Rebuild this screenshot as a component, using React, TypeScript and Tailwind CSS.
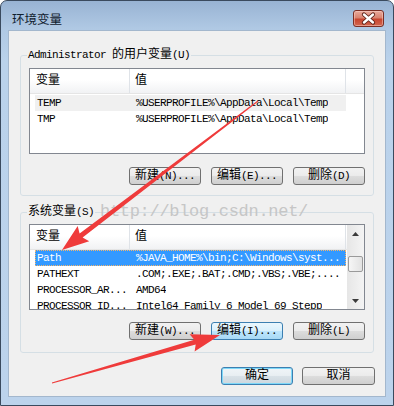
import type { ReactNode } from 'react';

const ascii = 'text-[11px] tracking-[-0.6px]';

type Variant = 'normal' | 'hover' | 'default';

const btnStyle: Record<Variant, string> = {
	normal:
		'border-[#707070] bg-[linear-gradient(to_bottom,#f2f2f2_0%,#ebebeb_49%,#dddddd_50%,#cfcfcf_100%)]',
	hover:
		'border-[#3c7fb1] bg-[linear-gradient(to_bottom,#eaf6fd_0%,#d9f0fc_49%,#bee6fd_50%,#a7d9f5_100%)]',
	default:
		'border-[#3c7fb1] shadow-[inset_0_0_0_1px_#7fd8f8] bg-[linear-gradient(to_bottom,#f0f5f8_0%,#e8eef2_49%,#d9e2e8_50%,#cdd7de_100%)]'
};

function Btn({
	cn,
	en,
	variant = 'normal',
	w = 'w-[72px]'
}: {
	cn: string;
	en?: string;
	variant?: Variant;
	w?: string;
}) {
	return (
		<div
			className={`${w} h-[18px] rounded-[3px] border flex items-center justify-center leading-[16px] ${btnStyle[variant]}`}
		>
			<span>{cn}</span>
			{en && <span className={ascii}>{en}</span>}
		</div>
	);
}

function Header({ extra }: { extra?: boolean }) {
	return (
		<div className="h-[25px] flex shrink-0 border-b border-[#e5e5e5] bg-[linear-gradient(to_bottom,#ffffff_0%,#ffffff_45%,#f1f2f4_100%)] leading-[24px]">
			<div className="w-[100px] border-r border-[#dfe3e8] pl-[6px]">变量</div>
			<div className="w-[216px] border-r border-[#dfe3e8] pl-[5px]">值</div>
			{extra && <div className="flex-1" />}
		</div>
	);
}

type Row = { name: string; value: string; state?: 'selected' | 'inactive' };

function Rows({ rows, pt }: { rows: Row[]; pt: string }) {
	return (
		<div className={`pl-[5px] ${pt} ${ascii}`}>
			{rows.map((r) => (
				<div
					key={r.name}
					className={`w-[311px] h-[16px] flex items-center leading-[16px] whitespace-nowrap ${
						r.state === 'selected'
							? 'bg-[#3399ff] text-white outline-1 outline-dotted outline-[#f5b56a] -outline-offset-1'
							: r.state === 'inactive'
								? 'bg-[#f0f0f0]'
								: ''
					}`}
				>
					<div className="w-[95px] pl-[2px] shrink-0 overflow-hidden">{r.name}</div>
					<div className="pl-[6px] overflow-hidden">{r.value}</div>
				</div>
			))}
		</div>
	);
}

function Tri({ down }: { down?: boolean }) {
	return (
		<svg width="7" height="4" viewBox="0 0 7 4">
			<path d={down ? 'M0 0H7L3.5 4Z' : 'M0 4H7L3.5 0Z'} fill="#3a3a3a" />
		</svg>
	);
}

function Group({ label, children, cls }: { label: ReactNode; children: ReactNode; cls?: string }) {
	return (
		<fieldset className={`border border-[#d5dfe5] rounded-[3px] ${cls ?? ''}`}>
			<legend className="ml-[6px] px-[1px] leading-[14px]">{label}</legend>
			<div className="px-[8px]">{children}</div>
		</fieldset>
	);
}

function arrowPoints(
	tx: number,
	ty: number,
	hx: number,
	hy: number,
	tailW: number,
	neckW: number,
	headLen: number,
	headW: number
) {
	const dx = hx - tx;
	const dy = hy - ty;
	const len = Math.hypot(dx, dy);
	const ux = dx / len;
	const uy = dy / len;
	const nx = -uy;
	const ny = ux;
	const bx = hx - ux * headLen;
	const by = hy - uy * headLen;
	const p = (x: number, y: number, s: number) => `${(x + nx * s).toFixed(1)},${(y + ny * s).toFixed(1)}`;
	return [
		p(tx, ty, tailW / 2),
		p(bx, by, neckW / 2),
		p(bx - ux * 3, by - uy * 3, headW / 2),
		p(hx, hy, 0),
		p(bx - ux * 3, by - uy * 3, -headW / 2),
		p(bx, by, -neckW / 2),
		p(tx, ty, -tailW / 2)
	].join(' ');
}

export default function App() {
	const userRows: Row[] = [
		{ name: 'TEMP', value: '%USERPROFILE%\\AppData\\Local\\Temp', state: 'inactive' },
		{ name: 'TMP', value: '%USERPROFILE%\\AppData\\Local\\Temp' }
	];
	const sysRows: Row[] = [
		{ name: 'Path', value: '%JAVA_HOME%\\bin;C:\\Windows\\syst...', state: 'selected' },
		{ name: 'PATHEXT', value: '.COM;.EXE;.BAT;.CMD;.VBS;.VBE;....' },
		{ name: 'PROCESSOR_AR...', value: 'AMD64' },
		{ name: 'PROCESSOR_ID...', value: 'Intel64 Family 6 Model 69 Stepp' }
	];

	return (
		<div className="w-[394px] h-[406px] relative overflow-hidden rounded-t-[7px] border border-[#3a4a5e] bg-[linear-gradient(to_bottom,#98b3d3_0px,#b0c9e4_28px,#bad2eb_60px,#bcd3ec_100%)] font-['Liberation_Mono','Noto_Sans_CJK_SC',monospace] text-[12px] text-black">
			{/* title bar */}
			<div className="h-[29px] flex items-start justify-between pl-[11px] pr-[9px] pt-[9px]">
				<span className="font-['Noto_Sans_CJK_SC',sans-serif] text-[12.5px] leading-[17px] text-[#10202e]">
					环境变量
				</span>
				<div className="w-[31px] h-[17px] rounded-[3px] border border-[#7a2e24] bg-[linear-gradient(to_bottom,#e9aa9c_0%,#d98370_45%,#c8452f_55%,#d2664f_100%)] shadow-[inset_0_0_0_1px_rgba(255,220,210,0.45)] flex items-center justify-center">
					<svg width="29" height="15" viewBox="0 0 29 15">
						<path d="M10 3.5L19 11.5M19 3.5L10 11.5" stroke="#5a1f16" strokeWidth="4.2" strokeLinecap="round" />
						<path d="M10 3.5L19 11.5M19 3.5L10 11.5" stroke="#ffffff" strokeWidth="2.4" strokeLinecap="round" />
					</svg>
				</div>
			</div>

			{/* client area */}
			<div className="mx-[7px] h-[367px] bg-[#f0f0f0] border border-[#a3b7cd] px-[11px] pt-[17px]">
				<Group
					label={
						<>
							<span className={ascii}>Administrator </span>的用户变量<span className={ascii}>(U)</span>
						</>
					}
					cls="pb-[10px]"
				>
					<div className="mt-[6px] h-[86px] border border-[#828790] bg-white overflow-hidden flex flex-col">
						<Header extra />
						<Rows rows={userRows} pt="pt-[1px]" />
					</div>
					<div className="mt-[13px] flex justify-end gap-[10px]">
						<Btn cn="新建" en="(N)..." />
						<Btn cn="编辑" en="(E)..." />
						<Btn cn="删除" en="(D)" />
					</div>
				</Group>

				<Group
					label={
						<>
							系统变量<span className={ascii}>(S)</span>
						</>
					}
					cls="mt-[9px] pb-[12px]"
				>
					<div className="mt-[5px] h-[86px] border border-[#828790] bg-white overflow-hidden flex">
						<div className="w-[317px] flex flex-col overflow-hidden">
							<Header />
							<Rows rows={sysRows} pt="pt-0" />
						</div>
						<div className="w-[17px] flex flex-col bg-[linear-gradient(to_right,#e6e6e6,#f4f4f4)]">
							<div className="h-[17px] flex items-center justify-center">
								<Tri />
							</div>
							<div className="flex-1 pt-[14px]">
								<div className="mx-[1px] h-[16px] rounded-[2px] border border-[#9a9a9a] bg-[linear-gradient(to_right,#f6f6f6,#e2e2e2)]" />
							</div>
							<div className="h-[17px] flex items-center justify-center">
								<Tri down />
							</div>
						</div>
					</div>
					<div className="mt-[12px] flex justify-end gap-[10px]">
						<Btn cn="新建" en="(W)..." />
						<Btn cn="编辑" en="(I)..." variant="hover" />
						<Btn cn="删除" en="(L)" />
					</div>
				</Group>

				<div className="mt-[14px] mr-[-1px] flex justify-end gap-[9px]">
					<Btn cn="确定" variant="default" />
					<Btn cn="取消" w="w-[73px]" />
				</div>
			</div>

			{/* watermark */}
			<div className="absolute left-[99px] top-[199px] font-['Liberation_Mono',monospace] text-[17px] tracking-[-0.3px] leading-[24px] text-[#c6c6c6] pointer-events-none">
				http://blog.csdn.net/
			</div>

			{/* annotation arrows */}
			<svg className="absolute left-[-1px] top-[-1px] pointer-events-none" width="394" height="406" viewBox="0 0 394 406">
				<polygon points={arrowPoints(258, 101, 62, 250, 1, 5, 24, 19)} fill="#ef3b3b" />
				<polygon points={arrowPoints(52, 383, 220, 335, 1, 5, 26, 18)} fill="#ef3b3b" />
			</svg>
		</div>
	);
}
